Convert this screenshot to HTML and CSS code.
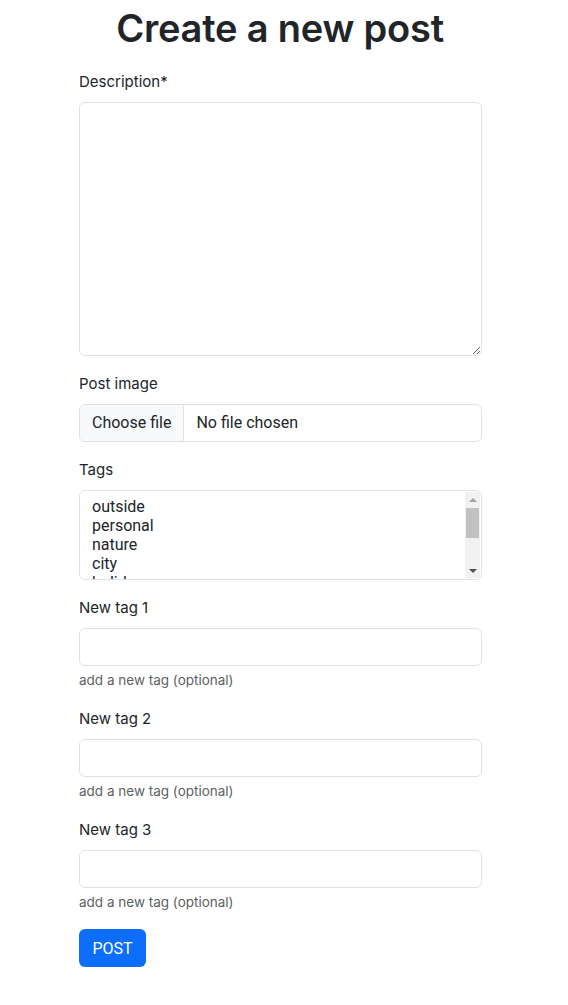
FILE: index.html
```html
<!DOCTYPE html>
<html lang="en">
<head>
<meta charset="utf-8">
<title>Create a new post</title>
<link rel="stylesheet" href="styles.css">
</head>
<body>
<main class="page">
  <h1 class="title">Create a new post</h1>
  <form class="form">
    <div class="group">
      <label class="label">Description*</label>
      <textarea class="control textarea"></textarea>
    </div>
    <div class="group">
      <label class="label">Post image</label>
      <div class="control file">
        <span class="file-btn">Choose file</span>
        <span class="file-name">No file chosen</span>
      </div>
    </div>
    <div class="group">
      <label class="label">Tags</label>
      <div class="control select">
        <div class="options">
          <div class="option">outside</div>
          <div class="option">personal</div>
          <div class="option">nature</div>
          <div class="option">city</div>
          <div class="option">holiday</div>
        </div>
        <div class="scrollbar">
          <span class="arrow up"></span>
          <span class="thumb"></span>
          <span class="track"></span>
          <span class="arrow down"></span>
        </div>
      </div>
    </div>
    <div class="group">
      <label class="label">New tag 1</label>
      <input class="control input" type="text">
      <div class="help">add a new tag (optional)</div>
    </div>
    <div class="group">
      <label class="label">New tag 2</label>
      <input class="control input" type="text">
      <div class="help">add a new tag (optional)</div>
    </div>
    <div class="group">
      <label class="label">New tag 3</label>
      <input class="control input" type="text">
      <div class="help">add a new tag (optional)</div>
    </div>
    <button class="btn" type="button">POST</button>
  </form>
</main>
</body>
</html>
```
FILE: styles.css
```css
* { box-sizing: border-box; }
html, body { margin: 0; padding: 0; background: #fff; }
body {
  font-family: "Inter", "Noto Sans", sans-serif;
  color: #212529;
  font-size: 16px;
  line-height: 1.5;
}
.page {
  width: 403px;
  margin-left: 79px;
  padding-top: 4px;
}
.title {
  margin: 0 0 18px;
  text-align: center;
  font-size: 38px;
  font-weight: 600;
  line-height: 48px;
  letter-spacing: -0.2px;
  margin-left: -1px;
}
.form { display: flex; flex-direction: column; }
.group { margin-bottom: 16px; display: flex; flex-direction: column; }
.label {
  display: block;
  margin-bottom: 8px;
  font-size: 15px;
  line-height: 24px;
}
.control {
  display: block;
  width: 100%;
  border: 1px solid #dee2e6;
  border-radius: 6px;
  background: #fff;
  font-family: "Roboto", "Liberation Sans", sans-serif;
  font-size: 16px;
  color: #212529;
}
.textarea {
  height: 254px;
  resize: vertical;
  padding: 6px 12px;
  margin: 0;
}
.file {
  height: 38px;
  display: flex;
  overflow: hidden;
}
.file-btn {
  background: #f8f9fa;
  border-right: 1px solid #dee2e6;
  padding: 0 12px;
  display: flex;
  align-items: center;
}
.file-name {
  padding: 0 12px;
  display: flex;
  align-items: center;
}
.select {
  height: 90px;
  display: flex;
  overflow: hidden;
}
.options {
  flex: 1;
  padding: 6px 12px;
  overflow: hidden;
  line-height: 19px;
}
.scrollbar {
  width: 15px;
  margin: 1px 1px 1px 0;
  background: #f1f1f1;
  display: flex;
  flex-direction: column;
  align-items: center;
}
.arrow {
  width: 15px;
  height: 15px;
  display: flex;
  justify-content: center;
  align-items: center;
}
.arrow::before {
  content: "";
  width: 0; height: 0;
  border-left: 4px solid transparent;
  border-right: 4px solid transparent;
}
.arrow.up::before { border-bottom: 4px solid #a3a3a3; }
.arrow.down::before { border-top: 4px solid #505050; }
.thumb {
  width: 13px;
  height: 30px;
  margin-top: 1px;
  background: #c1c1c1;
}
.track { flex: 1; }
.input {
  height: 38px;
  padding: 6px 12px;
  margin: 0;
}
.help {
  margin-top: 4px;
  font-size: 13.5px;
  line-height: 21px;
  color: #5b5f63;
}
.btn {
  align-self: flex-start;
  width: 67px;
  height: 38px;
  border: none;
  border-radius: 6px;
  background: #0d6efd;
  color: #fff;
  font-family: "Roboto", "Liberation Sans", sans-serif;
  font-size: 16px;
  padding: 0;
  margin: 0;
}
```
